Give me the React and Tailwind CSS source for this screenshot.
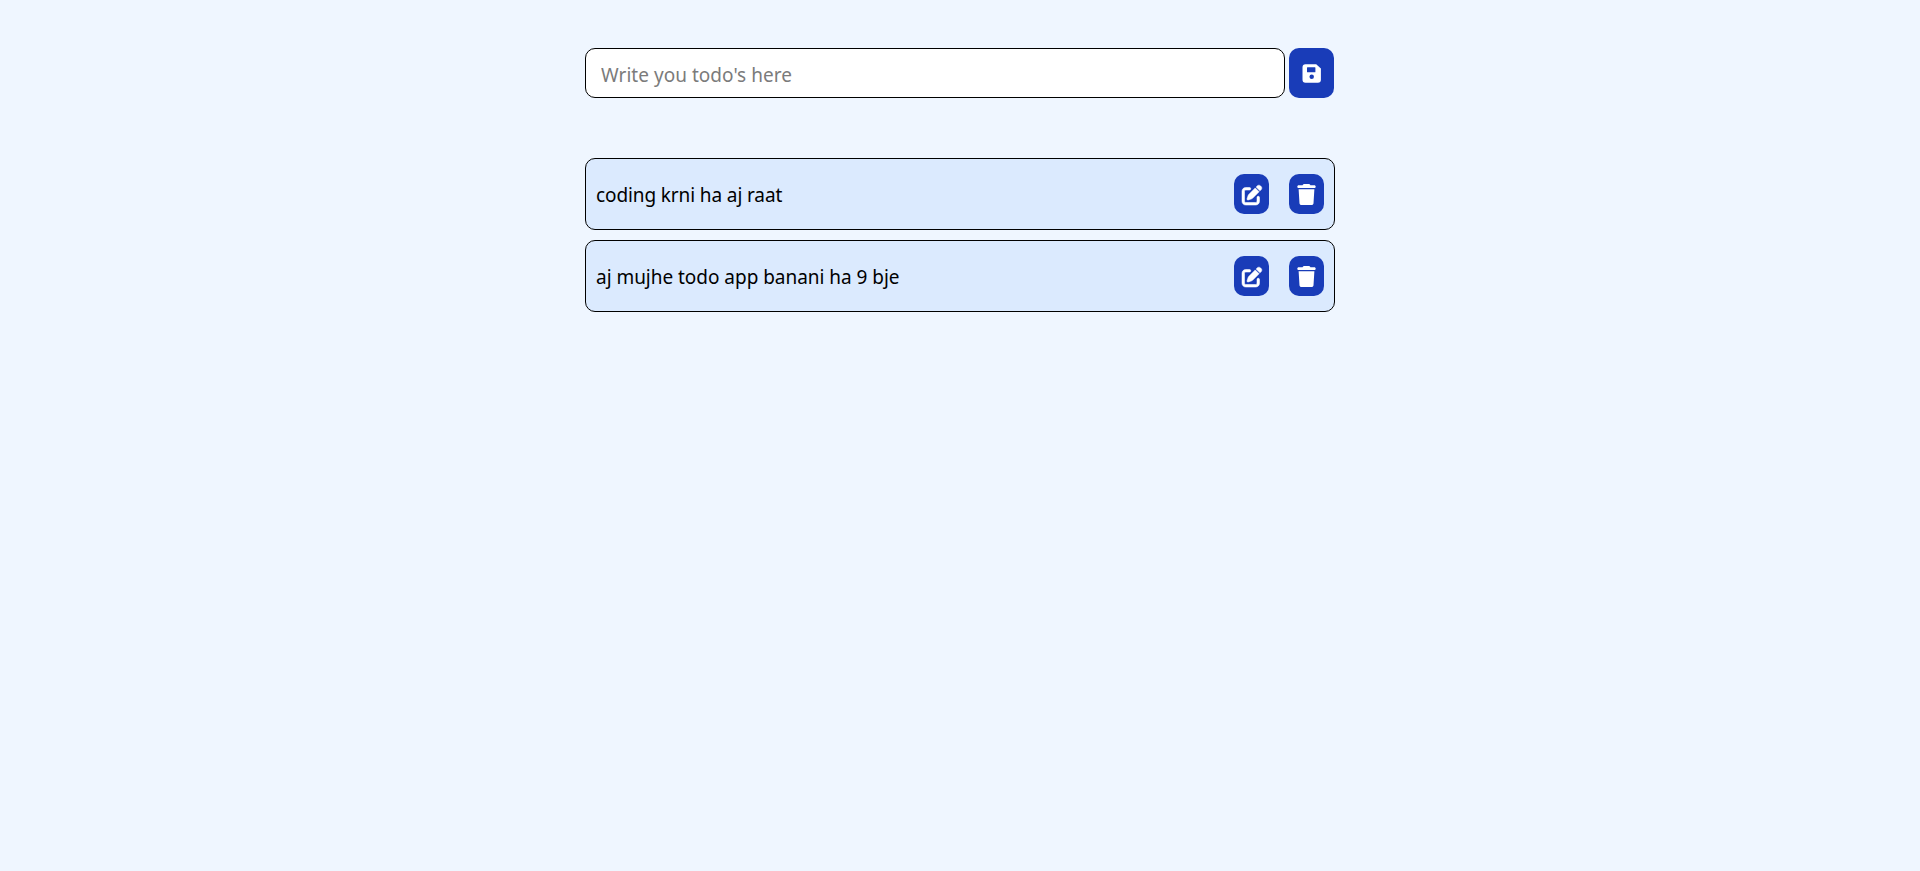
import { FaPenToSquare, FaTrash } from "react-icons/fa6";

const todos = [
  { text: "coding krni ha aj raat", spacing: "tracking-[-0.11px]" },
  { text: "aj mujhe todo app banani ha 9 bje", spacing: "tracking-[-0.03px]" },
];

function SaveIcon() {
  return (
    <svg className="h-[19px] w-[19px]" viewBox="0 0 19 19" fill="currentColor">
      <path
        fillRule="evenodd"
        d="M3.3 0.3H14.2L18.9 4.4V15.7a3 3 0 0 1-3 3H3.5a3 3 0 0 1-3-3V3.3a3 3 0 0 1 3-3zM5.5 3.2a.5.5 0 0 0-.5.5v4.1a.5.5 0 0 0 .5.5h7.4a.5.5 0 0 0 .5-.5V3.7a.5.5 0 0 0-.5-.5zM9.7 10.6a2.25 2.25 0 1 0 0 4.5 2.25 2.25 0 1 0 0-4.5z"
      />
    </svg>
  );
}

function TodoRow({ text, spacing }) {
  return (
    <li className="flex h-[72px] items-center gap-5 rounded-[10px] border border-black bg-[#dbeafe] px-[10px]">
      <span className={`flex-1 pt-[2px] text-[19px] text-black ${spacing}`}>{text}</span>
      <button className="flex h-10 w-[35px] items-center justify-center rounded-[10px] bg-[#193cb8] pt-px text-white">
        <FaPenToSquare size={20} className="overflow-visible stroke-white stroke-[14]" />
      </button>
      <button className="flex h-10 w-[35px] items-center justify-center rounded-[10px] bg-[#193cb8] text-white">
        <FaTrash size={21} />
      </button>
    </li>
  );
}

export default function App() {
  return (
    <main className="min-h-screen bg-[#eff6ff] pt-12 font-['Noto_Sans',sans-serif]">
      <div className="mx-auto w-[750px]">
        <form className="flex h-[50px] gap-1">
          <input
            className="w-[700px] rounded-[10px] border border-black bg-white px-[15px] pt-[5px] text-[19px] tracking-[0.03px] placeholder:text-[#7b7b7b]"
            placeholder="Write you todo's here"
          />
          <button
            type="button"
            className="flex w-[45px] items-center justify-center rounded-[10px] bg-[#193cb8] text-white"
          >
            <SaveIcon />
          </button>
        </form>
        <ul className="mt-[60px] flex flex-col gap-[10px]">
          {todos.map((todo) => (
            <TodoRow key={todo.text} {...todo} />
          ))}
        </ul>
      </div>
    </main>
  );
}
